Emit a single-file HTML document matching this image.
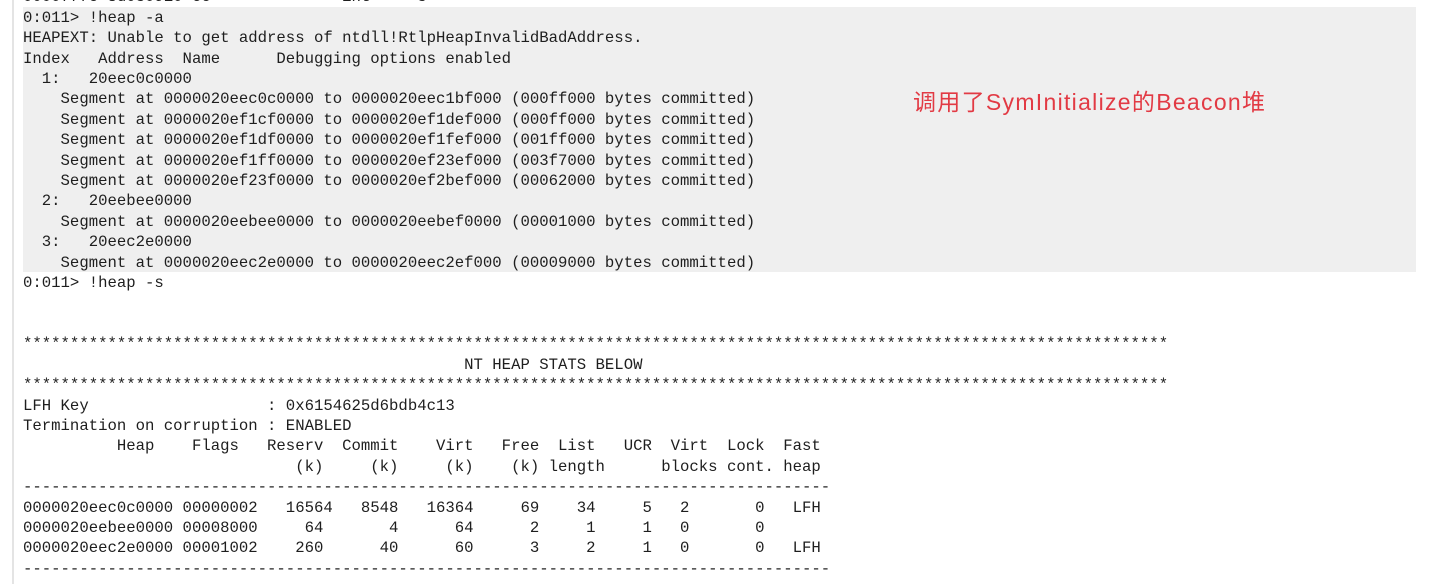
<!DOCTYPE html>
<html><head><meta charset="utf-8">
<style>
html,body{margin:0;padding:0;background:#fff;width:1440px;height:584px;overflow:hidden;position:relative}
.vline{position:absolute;left:12px;top:0;width:2px;height:584px;background:#e4e4e4}
.band{position:absolute;left:23px;top:7px;width:1393px;height:265px;background:#efefef}
pre{position:absolute;left:23px;top:-12.6px;margin:0;font-family:"Liberation Mono",monospace;font-size:15.65px;line-height:20.4px;color:#1e1e1e;white-space:pre}
.red{position:absolute;left:913px;top:86px;font-family:"Liberation Sans","Noto Sans CJK SC",sans-serif;font-size:23px;letter-spacing:1.3px;line-height:32px;color:#e23a44;white-space:nowrap}
</style></head><body>
<div class="vline"></div>
<div class="band"></div>
<pre>00007ffe`8d030910 cc              int     3
0:011&gt; !heap -a
HEAPEXT: Unable to get address of ntdll!RtlpHeapInvalidBadAddress.
Index   Address  Name      Debugging options enabled
  1:   20eec0c0000
    Segment at 0000020eec0c0000 to 0000020eec1bf000 (000ff000 bytes committed)
    Segment at 0000020ef1cf0000 to 0000020ef1def000 (000ff000 bytes committed)
    Segment at 0000020ef1df0000 to 0000020ef1fef000 (001ff000 bytes committed)
    Segment at 0000020ef1ff0000 to 0000020ef23ef000 (003f7000 bytes committed)
    Segment at 0000020ef23f0000 to 0000020ef2bef000 (00062000 bytes committed)
  2:   20eebee0000
    Segment at 0000020eebee0000 to 0000020eebef0000 (00001000 bytes committed)
  3:   20eec2e0000
    Segment at 0000020eec2e0000 to 0000020eec2ef000 (00009000 bytes committed)
0:011&gt; !heap -s


**************************************************************************************************************************
                                               NT HEAP STATS BELOW
**************************************************************************************************************************
LFH Key                   : 0x6154625d6bdb4c13
Termination on corruption : ENABLED
          Heap    Flags   Reserv  Commit    Virt   Free  List   UCR  Virt  Lock  Fast
                             (k)     (k)     (k)    (k) length      blocks cont. heap
--------------------------------------------------------------------------------------
0000020eec0c0000 00000002   16564   8548   16364     69    34     5   2       0   LFH
0000020eebee0000 00008000     64       4      64      2     1     1   0       0
0000020eec2e0000 00001002    260      40      60      3     2     1   0       0   LFH
--------------------------------------------------------------------------------------</pre>
<div class="red">调用了SymInitialize的Beacon堆</div>
</body></html>
